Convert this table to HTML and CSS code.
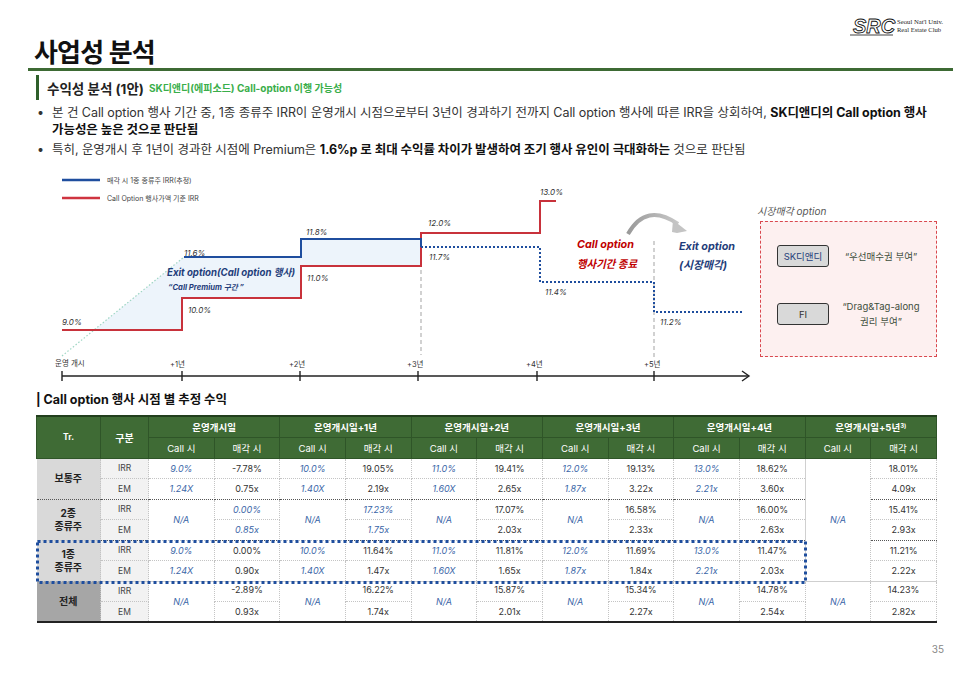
FILE: index.html
```html
<!DOCTYPE html>
<html lang="ko">
<head>
<meta charset="utf-8">
<title>사업성 분석</title>
<link rel="stylesheet" href="styles.css">
</head>
<body>
<div class="page">
  <header class="top">
    <h1 class="title">사업성 분석</h1>
    <svg class="logo" width="100" height="22" viewBox="0 0 100 22">
      <text class="logo-src" x="4" y="17" textLength="42" lengthAdjust="spacingAndGlyphs">SRC</text>
      <line x1="1" y1="19" x2="44" y2="19" stroke="#111" stroke-width="0.8"/>
      <text class="logo-sm" x="48" y="8" textLength="46" lengthAdjust="spacingAndGlyphs">Seoul Nat'l Univ.</text>
      <text class="logo-sm" x="48" y="15.5" textLength="44" lengthAdjust="spacingAndGlyphs">Real Estate Club</text>
    </svg>
  </header>

  <div class="sub">
    <h2 class="sub-title">수익성 분석 (1안)</h2>
    <span class="sub-green">SK디앤디(에피소드) Call-option 이행 가능성</span>
  </div>

  <ul class="bullets">
    <li>본 건 Call option 행사 기간 중, 1종 종류주 IRR이 운영개시 시점으로부터 3년이 경과하기 전까지 Call option 행사에 따른 IRR을 상회하여, <b>SK디앤디의 Call option 행사<br>가능성은 높은 것으로 판단됨</b></li>
    <li>특히, 운영개시 후 1년이 경과한 시점에 Premium은 <b>1.6%p 로 최대 수익률 차이가 발생하여 조기 행사 유인이 극대화하는</b> 것으로 판단됨</li>
  </ul>

  <section class="chart-row">
    <svg class="chart" width="720" height="215" viewBox="36 170 720 215">
      <!-- legend -->
      <line x1="62" y1="181" x2="100" y2="181" stroke="#1f4e9e" stroke-width="2.5"/>
      <text class="lg" x="107" y="183.5">매각 시 1종 종류주 IRR(추정)</text>
      <line x1="62" y1="199" x2="100" y2="199" stroke="#cf3440" stroke-width="2.5"/>
      <text class="lg" x="107" y="201.5">Call Option 행사가액 기준 IRR</text>

      <!-- premium area -->
      <polygon points="94,331 184,258 301,258 301,240 421,240 421,267 301,267 301,299 182,299 182,331" fill="#edf4fb"/>
      <line x1="62" y1="357" x2="184" y2="258" stroke="#9fd6c4" stroke-width="1.2" stroke-dasharray="1.5 2"/>

      <!-- dashed verticals -->
      <line x1="421" y1="250" x2="421" y2="356" stroke="#b3b3b3" stroke-width="1.2" stroke-dasharray="4 3"/>
      <line x1="654" y1="242" x2="654" y2="358" stroke="#b3b3b3" stroke-width="1.2" stroke-dasharray="4 3"/>

      <!-- lines -->
      <polyline points="62,331 182,331 182,299 301,299 301,267 421,267 421,234 540,234 540,202 556,202" fill="none" stroke="#c8323b" stroke-width="2"/>
      <polyline points="184,258 301,258 301,240 421,240 421,248" fill="none" stroke="#1f4e9e" stroke-width="2"/>
      <polyline points="421,248 540,248 540,283 654,283 654,313 742,313" fill="none" stroke="#1f4e9e" stroke-width="2" stroke-dasharray="2 2"/>

      <!-- value labels -->
      <text class="v" x="62" y="326">9.0%</text>
      <text class="v" x="184" y="256.5">11.6%</text>
      <text class="v" x="188" y="314">10.0%</text>
      <text class="v" x="306" y="236">11.8%</text>
      <text class="v" x="307" y="282">11.0%</text>
      <text class="v" x="428" y="227">12.0%</text>
      <text class="v" x="429" y="261">11.7%</text>
      <text class="v" x="540" y="196">13.0%</text>
      <text class="v" x="545" y="296">11.4%</text>
      <text class="v" x="660" y="326">11.2%</text>

      <!-- annotations -->
      <text class="exit" x="167" y="277" textLength="128" lengthAdjust="spacingAndGlyphs">Exit option(Call option 행사)</text>
      <text class="prem" x="168" y="291" textLength="76" lengthAdjust="spacingAndGlyphs">“Call Premium 구간 ”</text>

      <text class="callend" x="577" y="249" textLength="57" lengthAdjust="spacingAndGlyphs">Call option</text>
      <text class="callend" x="577" y="269" textLength="60" lengthAdjust="spacingAndGlyphs">행사기간 종료</text>
      <text class="exit2" x="679" y="251" textLength="56" lengthAdjust="spacingAndGlyphs">Exit option</text>
      <text class="exit2" x="679" y="270" textLength="48" lengthAdjust="spacingAndGlyphs">(시장매각)</text>

      <defs>
        <linearGradient id="arc" x1="0" y1="0" x2="1" y2="0">
          <stop offset="0" stop-color="#9a9a9a"/>
          <stop offset="1" stop-color="#c8c8c8"/>
        </linearGradient>
      </defs>
      <path d="M628 235 Q 646 203 678 225" fill="none" stroke="url(#arc)" stroke-width="4"/>
      <polygon points="673,221 687,232 677,234 672,233" fill="#c4c4c4"/>

      <!-- axis -->
      <line x1="62" y1="377" x2="749" y2="377" stroke="#222" stroke-width="1.4"/>
      <polyline points="742,372 749,377 742,382" fill="none" stroke="#222" stroke-width="1.4"/>
      <g stroke="#222" stroke-width="1.4">
        <line x1="62" y1="372" x2="62" y2="382"/>
        <line x1="182" y1="372" x2="182" y2="382"/>
        <line x1="300" y1="372" x2="300" y2="382"/>
        <line x1="418" y1="372" x2="418" y2="382"/>
        <line x1="537" y1="372" x2="537" y2="382"/>
        <line x1="654" y1="372" x2="654" y2="382"/>
      </g>
      <text class="tk" x="55" y="367">운영 개시</text>
      <text class="tk" x="170" y="368">+1년</text>
      <text class="tk" x="289" y="368">+2년</text>
      <text class="tk" x="407" y="368">+3년</text>
      <text class="tk" x="526" y="368">+4년</text>
      <text class="tk" x="644" y="368">+5년</text>
    </svg>

    <div class="market">
      <div class="market-label">시장매각 option</div>
      <div class="market-box">
        <div class="opt">
          <span class="btn btn-sk">SK디앤디</span>
          <span class="quote">“우선매수권 부여”</span>
        </div>
        <div class="opt opt2">
          <span class="btn">FI</span>
          <span class="quote">“Drag&amp;Tag-along<br>권리 부여”</span>
        </div>
      </div>
    </div>
  </section>

  <h3 class="tbl-title">| Call option 행사 시점 별 추정 수익</h3>

  <div class="tbl-wrap">
    <table class="tbl">
      <colgroup>
        <col class="c-tr"><col class="c-kind">
        <col><col><col><col><col><col><col><col><col><col><col><col>
      </colgroup>
      <thead>
        <tr class="h1">
          <th rowspan="2" class="h-tr">Tr.</th>
          <th rowspan="2" class="h-kind">구분</th>
          <th colspan="2">운영개시일</th>
          <th colspan="2">운영개시일+1년</th>
          <th colspan="2">운영개시일+2년</th>
          <th colspan="2">운영개시일+3년</th>
          <th colspan="2">운영개시일+4년</th>
          <th colspan="2">운영개시일+5년<sup>3)</sup></th>
        </tr>
        <tr class="h2">
          <th>Call 시</th><th>매각 시</th>
          <th>Call 시</th><th>매각 시</th>
          <th>Call 시</th><th>매각 시</th>
          <th>Call 시</th><th>매각 시</th>
          <th>Call 시</th><th>매각 시</th>
          <th>Call 시</th><th>매각 시</th>
        </tr>
      </thead>
      <tbody>
        <tr>
          <td rowspan="2" class="cat sb">보통주</td>
          <td class="kind">IRR</td>
          <td class="b">9.0%</td><td>-7.78%</td>
          <td class="b">10.0%</td><td>19.05%</td>
          <td class="b">11.0%</td><td>19.41%</td>
          <td class="b">12.0%</td><td>19.13%</td>
          <td class="b">13.0%</td><td>18.62%</td>
          <td rowspan="6" class="b na5">N/A</td><td>18.01%</td>
        </tr>
        <tr class="sep">
          <td class="kind">EM</td>
          <td class="b">1.24X</td><td>0.75x</td>
          <td class="b">1.40X</td><td>2.19x</td>
          <td class="b">1.60X</td><td>2.65x</td>
          <td class="b">1.87x</td><td>3.22x</td>
          <td class="b">2.21x</td><td>3.60x</td>
          <td>4.09x</td>
        </tr>
        <tr>
          <td rowspan="2" class="cat">2종<br>종류주</td>
          <td class="kind">IRR</td>
          <td rowspan="2" class="b">N/A</td><td class="b">0.00%</td>
          <td rowspan="2" class="b">N/A</td><td class="b">17.23%</td>
          <td rowspan="2" class="b">N/A</td><td>17.07%</td>
          <td rowspan="2" class="b">N/A</td><td>16.58%</td>
          <td rowspan="2" class="b">N/A</td><td>16.00%</td>
          <td>15.41%</td>
        </tr>
        <tr class="sep">
          <td class="kind">EM</td>
          <td class="b">0.85x</td>
          <td class="b">1.75x</td>
          <td>2.03x</td>
          <td>2.33x</td>
          <td>2.63x</td>
          <td>2.93x</td>
        </tr>
        <tr>
          <td rowspan="2" class="cat">1종<br>종류주</td>
          <td class="kind">IRR</td>
          <td class="b">9.0%</td><td>0.00%</td>
          <td class="b">10.0%</td><td>11.64%</td>
          <td class="b">11.0%</td><td>11.81%</td>
          <td class="b">12.0%</td><td>11.69%</td>
          <td class="b">13.0%</td><td>11.47%</td>
          <td>11.21%</td>
        </tr>
        <tr class="sep2">
          <td class="kind">EM</td>
          <td class="b">1.24X</td><td>0.90x</td>
          <td class="b">1.40X</td><td>1.47x</td>
          <td class="b">1.60X</td><td>1.65x</td>
          <td class="b">1.87x</td><td>1.84x</td>
          <td class="b">2.21x</td><td>2.03x</td>
          <td>2.22x</td>
        </tr>
        <tr>
          <td rowspan="2" class="cat all">전체</td>
          <td class="kind">IRR</td>
          <td rowspan="2" class="b">N/A</td><td class="up">-2.89%</td>
          <td rowspan="2" class="b">N/A</td><td class="up">16.22%</td>
          <td rowspan="2" class="b">N/A</td><td class="up">15.87%</td>
          <td rowspan="2" class="b">N/A</td><td class="up">15.34%</td>
          <td rowspan="2" class="b">N/A</td><td class="up">14.78%</td>
          <td rowspan="2" class="b">N/A</td><td class="up">14.23%</td>
        </tr>
        <tr>
          <td class="kind">EM</td>
          <td>0.93x</td>
          <td>1.74x</td>
          <td>2.01x</td>
          <td>2.27x</td>
          <td>2.54x</td>
          <td>2.82x</td>
        </tr>
      </tbody>
    </table>
    <svg class="hl" width="771" height="44" viewBox="0 0 771 44">
      <rect x="1.5" y="1.5" width="768" height="41" fill="none" stroke="#1f4e9e" stroke-width="3" stroke-dasharray="3 3"/>
    </svg>
  </div>

  <div class="pno">35</div>
</div>
</body>
</html>
```

FILE: styles.css
```css
* { box-sizing: border-box; }
html, body { margin: 0; padding: 0; background: #fff; }
body {
  font-family: Inter, "Noto Sans CJK KR", sans-serif;
  color: #333;
}
.page { width: 980px; height: 679px; overflow: hidden; }

/* header */
.top {
  display: flex;
  justify-content: space-between;
  align-items: flex-end;
  height: 71px;
  margin: 0 27px 0 28px;
  border-bottom: 3px solid #3d6a34;
}
.title {
  margin: 0 0 0 6px;
  font-size: 26px;
  line-height: 30px;
  font-weight: 700;
  color: #111;
  letter-spacing: -0.8px;
}
.logo { align-self: flex-start; margin: 16px 4px 0 0; overflow: visible; }
.logo-src {
  font-family: "Liberation Sans", sans-serif;
  font-style: italic;
  font-weight: 700;
  font-size: 21px;
  fill: #fff;
  stroke: #111;
  stroke-width: 0.9;
}
.logo-sm { font-family: "Liberation Serif", serif; font-size: 6.4px; fill: #222; }

/* subtitle */
.sub {
  display: flex;
  align-items: center;
  height: 25px;
  margin: 4px 0 0 36px;
  padding-left: 8px;
  border-left: 3px solid #2f5f2a;
}
.sub-title { margin: 0; font-size: 13.5px; font-weight: 700; color: #222; }
.sub-green { margin-left: 5px; font-size: 10px; font-weight: 700; color: #3aae4a; }

/* bullets */
.bullets {
  list-style: none;
  margin: 4px 0 0 0;
  padding: 0 0 0 52px;
  font-size: 12.5px;
  line-height: 17px;
  color: #333;
  white-space: nowrap;
  letter-spacing: -0.05px;
}
.bullets li { position: relative; }
.bullets li + li { margin-top: 3px; }
.bullets li::before {
  content: "•";
  position: absolute;
  left: -15px;
  top: 0;
  color: #333;
}
.bullets b { color: #111; font-weight: 700; }

/* chart */
.chart-row {
  display: flex;
  margin-top: 11px;
  height: 215px;
  padding-left: 36px;
}
.chart { display: block; flex: none; }
.chart text { font-family: Inter, "Noto Sans CJK KR", sans-serif; }
.chart .lg { font-size: 7px; fill: #444; }
.chart .v { font-size: 8px; font-style: italic; fill: #333; }
.chart .tk { font-size: 7.5px; fill: #333; }
.chart .exit { font-size: 10px; font-weight: 700; font-style: italic; fill: #1f3d7a; }
.chart .prem { font-size: 7.5px; font-weight: 700; font-style: italic; fill: #1f3d7a; }
.chart .callend { font-size: 11px; font-weight: 700; font-style: italic; fill: #c00000; }
.chart .exit2 { font-size: 11px; font-weight: 700; font-style: italic; fill: #1f3d7a; }

.market { margin-left: 1px; }
.market-label {
  margin-top: 35px;
  height: 14px;
  font-size: 10px;
  line-height: 14px;
  font-style: italic;
  color: #555;
}
.market-box {
  margin: 3px 0 0 3px;
  width: 177px;
  height: 136px;
  border: 1.5px dashed #d9484f;
  background: #fdf0f0;
  padding: 23px 0 0 16px;
}
.opt {
  display: grid;
  grid-template-columns: 52px 88px;
  column-gap: 8px;
  align-items: center;
  height: 22px;
}
.opt2 { height: 30px; margin-top: 32px; }
.btn {
  display: flex;
  align-items: center;
  justify-content: center;
  height: 22px;
  background: #d9d9d9;
  border: 1.5px solid #333;
  border-radius: 3px;
  font-size: 9.5px;
  color: #333;
}
.btn-sk { color: #1f3d7a; }
.quote {
  text-align: center;
  font-size: 9.5px;
  line-height: 15px;
  color: #3e4e3c;
}

/* table */
.tbl-title {
  margin: 7px 0 0 36px;
  font-size: 12.5px;
  line-height: 18px;
  font-weight: 700;
  color: #111;
}
.tbl-wrap { position: relative; margin: 6px 0 0 36px; width: 901px; }
.tbl {
  border-collapse: collapse;
  table-layout: fixed;
  width: 901px;
  font-size: 9px;
  border-bottom: 2px solid #222;
}
.c-tr { width: 64px; }
.c-kind { width: 48px; }
.tbl th {
  background: #3f6b35;
  color: #fff;
  font-weight: 400;
  font-size: 9.5px;
  height: 21px;
  padding: 0;
  border: 1px solid #2f5528;
}
.tbl .h1 th { border-top: 2px solid #223f1d; font-weight: 700; }
.tbl .h-tr { font-size: 8.5px; }
.tbl .h-kind { font-size: 10px; }
.tbl sup { font-size: 6px; vertical-align: 3px; }
.tbl td {
  height: 20.5px;
  padding: 0;
  text-align: center;
  color: #333;
  border: 1px dotted #c4c4c4;
}
.tbl .cat {
  background: #d9d9d9;
  color: #222;
  font-weight: 700;
  font-size: 10px;
  line-height: 13px;
  border-left: none;
}
.tbl .all { background: #a6a6a6; }
.tbl .kind { background: #f2f2f2; color: #444; font-size: 8.5px; }
.tbl .b { color: #3a66a7; font-style: italic; }
.tbl .sep td, .tbl td.sb { border-bottom: 1px dotted #555; }
.tbl .sep2 td { border-bottom: 1px solid #cfcfcf; }
.tbl td.na5 { border-bottom: 1px solid #cfcfcf; border-left: 1px solid #d0d0d0; }
.tbl .up { vertical-align: top; padding-top: 2px; }
.hl { position: absolute; left: 0; top: 125px; display: block; }

.pno {
  margin: 20px 36px 0 0;
  text-align: right;
  font-size: 10px;
  color: #888;
}
```
